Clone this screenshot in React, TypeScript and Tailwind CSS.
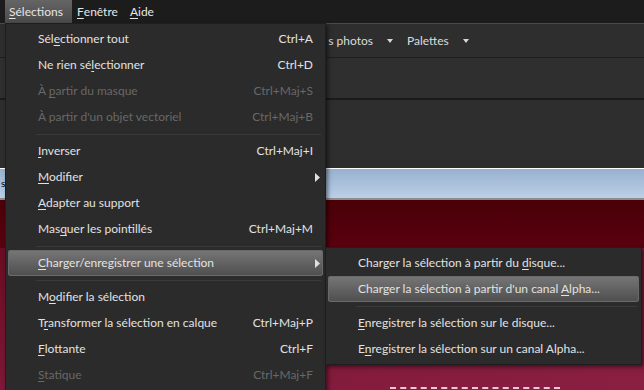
import React from "react";

type Item = {
  label: React.ReactNode;
  shortcut?: string;
  disabled?: boolean;
  sub?: boolean;
  active?: boolean;
};

const U = ({ children }: { children: React.ReactNode }) => (
  <span className="underline underline-offset-2">{children}</span>
);

const mainGroups: Item[][] = [
  [
    { label: <>Sél<U>e</U>ctionner tout</>, shortcut: "Ctrl+A" },
    { label: <>Ne rien sé<U>l</U>ectionner</>, shortcut: "Ctrl+D" },
    { label: <>À <U>p</U>artir du masque</>, shortcut: "Ctrl+Maj+S", disabled: true },
    { label: <>À partir d'un objet vectoriel</>, shortcut: "Ctrl+Maj+B", disabled: true },
  ],
  [
    { label: <><U>I</U>nverser</>, shortcut: "Ctrl+Maj+I" },
    { label: <><U>M</U>odifier</>, sub: true },
    { label: <><U>A</U>dapter au support</> },
    { label: <>Mas<U>q</U>uer les pointillés</>, shortcut: "Ctrl+Maj+M" },
  ],
  [{ label: <><U>C</U>harger/enregistrer une sélection</>, sub: true, active: true }],
  [
    { label: <>M<U>o</U>difier la sélection</> },
    { label: <>T<U>r</U>ansformer la sélection en calque</>, shortcut: "Ctrl+Maj+P" },
    { label: <><U>F</U>lottante</>, shortcut: "Ctrl+F" },
    { label: <><U>S</U>tatique</>, shortcut: "Ctrl+Maj+F", disabled: true },
  ],
];

const subGroups: Item[][] = [
  [
    { label: <>Charger la sélection à partir du <U>d</U>isque...</> },
    { label: <>Charger la sélection à partir d'un canal <U>A</U>lpha...</>, active: true },
  ],
  [
    { label: <><U>E</U>nregistrer la sélection sur le disque...</> },
    { label: <>E<U>n</U>registrer la sélection sur un canal Alpha...</> },
  ],
];

function Row({ item }: { item: Item }) {
  return (
    <div className="h-[26px] px-[2px] flex">
      <div
        className={`flex-1 flex items-center pl-[30px] pr-[10px] rounded-[3px] ${
          item.active
            ? "bg-gradient-to-b from-[#777777] to-[#4e4e4e] shadow-[inset_0_0_0_1px_#6a6a6a]"
            : ""
        } ${item.disabled ? "text-[#686868]" : "text-[#e2e2e2]"}`}
      >
        <span className="flex-1 whitespace-nowrap">{item.label}</span>
        {item.shortcut && <span className="whitespace-nowrap">{item.shortcut}</span>}
        {item.sub && (
          <svg width="5" height="9" viewBox="0 0 5 9" className="-mr-[7px]">
            <path d="M0 0 L5 4.5 L0 9 Z" fill="#e0e0e0" />
          </svg>
        )}
      </div>
    </div>
  );
}

function Menu({ groups }: { groups: Item[][] }) {
  return (
    <div className="flex flex-col py-[2px]">
      {groups.map((g, i) => (
        <div key={i}>
          {i > 0 && (
            <div className="h-[8px] flex items-center pl-[30px] pr-[4px]">
              <div className="h-px w-full bg-[#3a3a3a]" />
            </div>
          )}
          {g.map((it, j) => (
            <Row key={j} item={it} />
          ))}
        </div>
      ))}
    </div>
  );
}

const Caret = () => (
  <svg width="6" height="4" viewBox="0 0 6 4" className="mx-[14px]">
    <path d="M0 0 H6 L3 4 Z" fill="#d8d8d8" />
  </svg>
);

export default function App() {
  return (
    <div
      className="relative w-[644px] h-[390px] overflow-hidden bg-[#2e2e2e] text-[12px]"
      style={{ fontFamily: "Lato, 'Noto Sans', sans-serif" }}
    >
      {/* application behind the menus */}
      <div className="flex flex-col h-full">
        <div className="h-[23px] bg-[#1c1c1c] flex items-stretch text-[#e6e6e6]">
          <div className="ml-[5px] px-[4px] w-[67px] flex items-center bg-gradient-to-b from-[#656565] to-[#4a4a4a]">
            <U>S</U>élections
          </div>
          <div className="px-[5px] flex items-center">
            <U>F</U>enêtre
          </div>
          <div className="px-[7px] flex items-center">
            <U>A</U>ide
          </div>
        </div>
        <div className="h-px bg-[#4a4a4a]" />
        <div className="h-[33px] flex items-center text-[#dcdcdc]">
          <div className="w-[373px] flex justify-end whitespace-nowrap">s photos</div>
          <Caret />
          <span>Palettes</span>
          <Caret />
        </div>
        <div className="h-px bg-[#1e1e1e]" />
        <div className="h-[40px] bg-[#2f2f2f]" />
        <div className="h-[2px] bg-[#1a1a1a]" />
        <div className="h-[68px] bg-[#2e2e2e]" />
        <div className="h-px bg-white" />
        <div className="h-[29px] bg-gradient-to-b from-[#98b1cf] to-[#bbd0e8] text-[10px] text-black flex items-center">
          <span className="ml-[1px]">s</span>
        </div>
        <div className="h-[2px] bg-[#8c8c8c]" />
        <div className="h-[48px] bg-gradient-to-b from-[#4a0007] to-[#5a0010]" />
        <div className="flex-1 bg-gradient-to-br from-[#6a0c22] via-[#7e1838] to-[#8a1f42] flex flex-col justify-end">
          <div className="ml-[390px] w-[170px] h-[3px] border-t-2 border-dashed border-[#f0c8d8]" />
        </div>
      </div>

      {/* main dropdown */}
      <div className="absolute left-[5px] top-[23px] w-[321px] h-[380px] bg-[#2b2b2b] border border-[#1e1e1e] shadow-[2px_2px_4px_rgba(0,0,0,0.5)]">
        <Menu groups={mainGroups} />
      </div>

      {/* submenu */}
      <div className="absolute left-[325px] top-[247px] w-[317px] bg-[#2b2b2b] border border-[#1e1e1e] shadow-[2px_2px_4px_rgba(0,0,0,0.5)]">
        <Menu groups={subGroups} />
      </div>
    </div>
  );
}
